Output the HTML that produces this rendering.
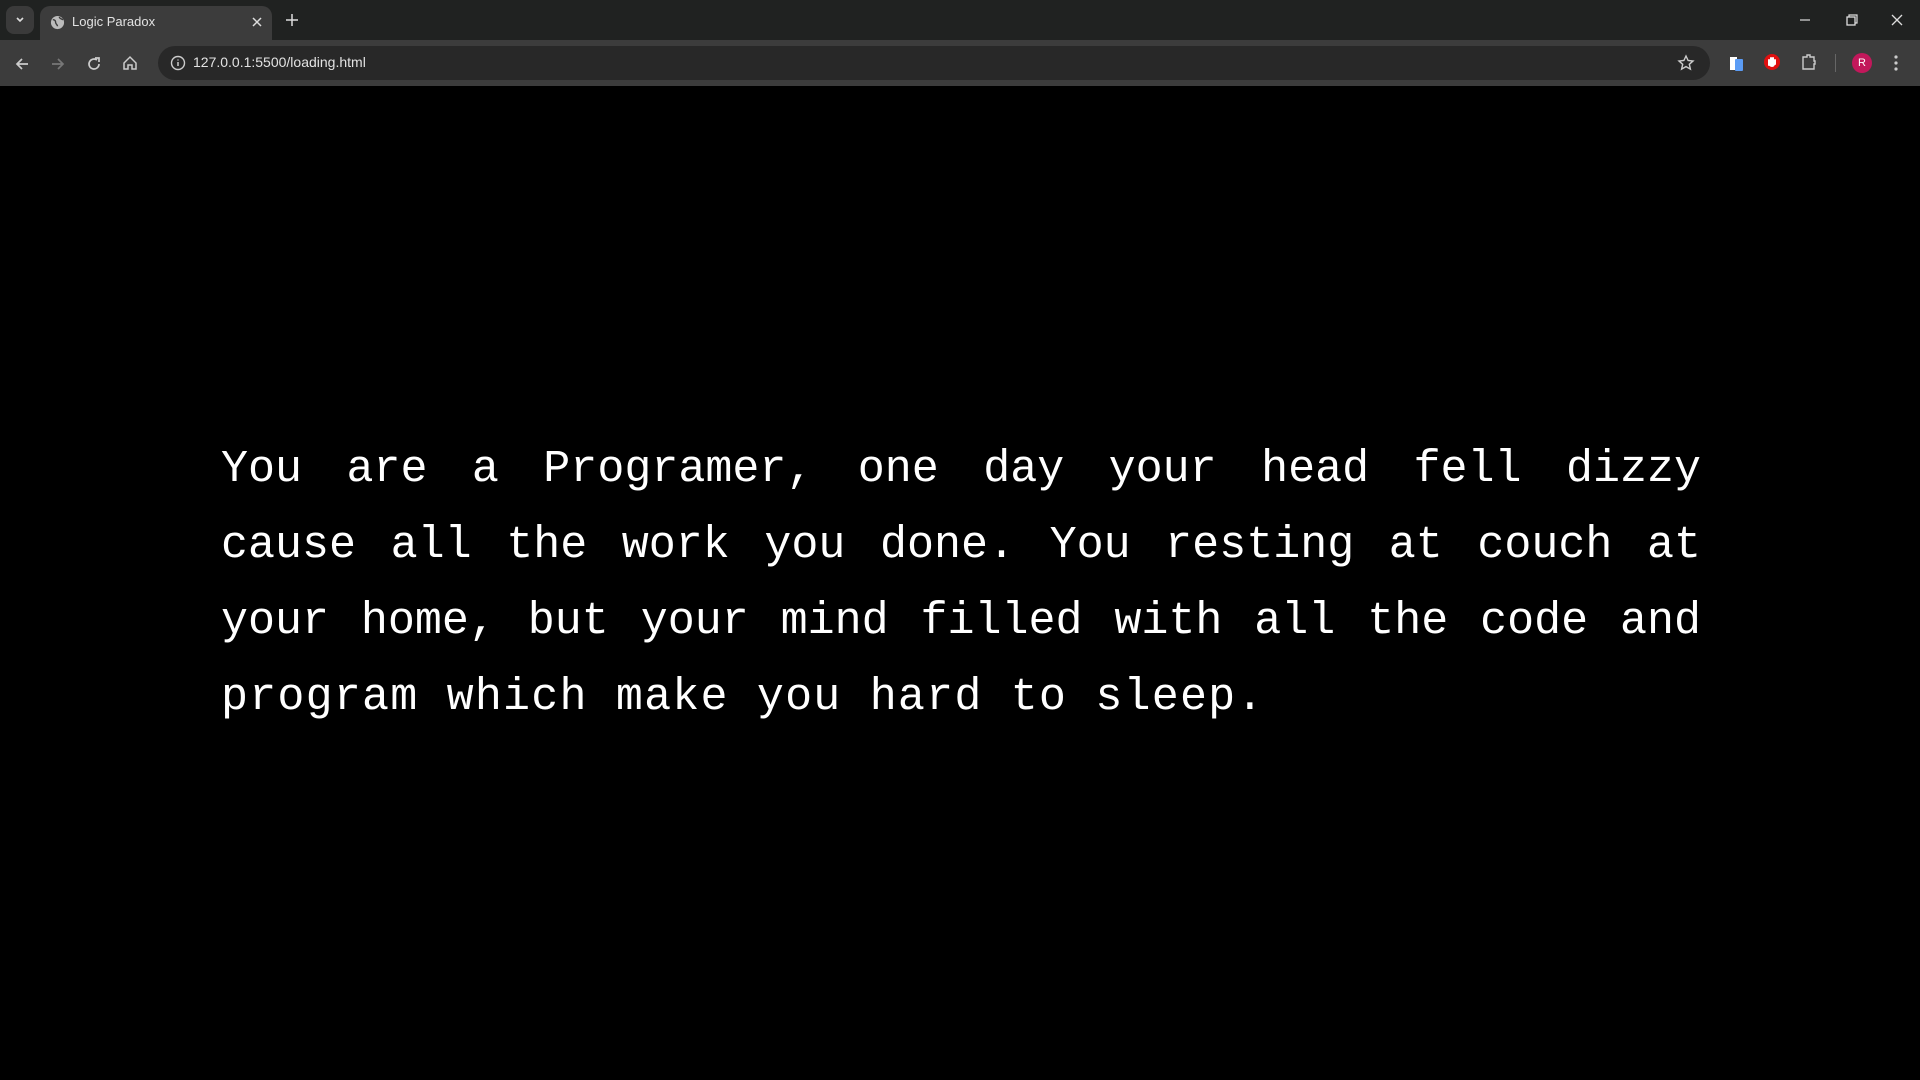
<!DOCTYPE html>
<html><head><meta charset="utf-8"><style>
*{margin:0;padding:0;box-sizing:border-box}
html,body{width:1920px;height:1080px;background:#000;overflow:hidden;font-family:"Liberation Sans",sans-serif}
.tabbar{position:absolute;left:0;top:0;width:1920px;height:40px;background:#202221}
.tsel{position:absolute;left:6px;top:6px;width:28px;height:28px;border-radius:8px;background:#3a3a3a}
.tab{position:absolute;left:40px;top:6px;width:232px;height:34px;background:#3c3c3c;border-radius:10px 10px 0 0}
.tab .t{position:absolute;left:32px;top:8px;color:#e3e3e3;font-size:13px}
.toolbar{position:absolute;left:0;top:40px;width:1920px;height:47px;background:#3c3c3c;border-bottom:1px solid #000}
.omni{position:absolute;left:158px;top:6px;width:1552px;height:34px;background:#282828;border-radius:17px}
.url{position:absolute;left:193px;top:14px;color:#e3e3e3;font-size:14px}
.txt{position:absolute;left:221px;top:432px;width:1480px;color:#fff;font-family:"Liberation Mono",monospace;font-size:45px;line-height:76px}
.txt div{text-align:justify;text-align-last:justify;white-space:nowrap}
.txt div.l{text-align-last:left;letter-spacing:1.2px}
svg{position:absolute}
</style></head><body>
<div class="tabbar">
 <div class="tsel"></div>
 <svg style="left:14px;top:14px" width="12" height="12" viewBox="0 0 12 12"><path d="M3 4l3 3 3-3" stroke="#ddd" stroke-width="1.6" fill="none"/></svg>
 <div class="tab">
  <svg style="left:10px;top:9px" width="15" height="15" viewBox="0 0 16 16"><circle cx="8" cy="8" r="7" fill="#bbb"/><path d="M3 5c2 0 3 1 3 3s2 2 2 4M10 2c0 2 2 2 4 3" stroke="#3c3c3c" stroke-width="1.5" fill="none"/></svg>
  <div class="t">Logic Paradox</div>
  <svg style="left:210px;top:9px" width="14" height="14" viewBox="0 0 14 14"><path d="M3 3l8 8M11 3l-8 8" stroke="#ddd" stroke-width="1.5"/></svg>
 </div>
 <svg style="left:285px;top:13px" width="14" height="14" viewBox="0 0 14 14"><path d="M7 1v12M1 7h12" stroke="#ddd" stroke-width="1.5"/></svg>
 <svg style="left:1798px;top:14px" width="14" height="12" viewBox="0 0 14 12"><path d="M2 6h10" stroke="#ddd" stroke-width="1.2"/></svg>
 <svg style="left:1845px;top:13px" width="14" height="14" viewBox="0 0 14 14"><rect x="2" y="4" width="8" height="8" stroke="#ddd" fill="none" stroke-width="1.3"/><path d="M4 4V2h8v8h-2" stroke="#ddd" fill="none" stroke-width="1.2"/></svg>
 <svg style="left:1890px;top:13px" width="14" height="14" viewBox="0 0 14 14"><path d="M2 2l10 10M12 2l-10 10" stroke="#ddd" stroke-width="1.3"/></svg>
</div>
<div class="toolbar">
 <svg style="left:14px;top:16px" width="16" height="16" viewBox="0 0 16 16"><path d="M14 8H3M8 3L3 8l5 5" stroke="#ccc" stroke-width="1.7" fill="none"/></svg>
 <svg style="left:50px;top:16px" width="16" height="16" viewBox="0 0 16 16"><path d="M2 8h11M8 3l5 5-5 5" stroke="#777" stroke-width="1.7" fill="none"/></svg>
 <svg style="left:86px;top:16px" width="16" height="16" viewBox="0 0 16 16"><path d="M13 8a5 5 0 1 1-2-4" stroke="#ccc" stroke-width="1.7" fill="none"/><path d="M9 2h4v4" stroke="#ccc" stroke-width="1.7" fill="none"/></svg>
 <svg style="left:122px;top:15px" width="16" height="16" viewBox="0 0 16 16"><path d="M2 8l6-6 6 6v6H10V10H6v4H2z" stroke="#ccc" stroke-width="1.5" fill="none"/></svg>
 <div class="omni">
  <svg style="left:12px;top:9px" width="16" height="16" viewBox="0 0 16 16"><circle cx="8" cy="8" r="6.5" stroke="#ccc" stroke-width="1.4" fill="none"/><path d="M8 7v4M8 4.5v1" stroke="#ccc" stroke-width="1.5"/></svg>
  <svg style="left:1519px;top:8px" width="18" height="18" viewBox="0 0 18 18"><path d="M9 2l2.1 4.5 4.9.5-3.7 3.3 1.1 4.8L9 12.6 4.6 15.1l1.1-4.8L2 7l4.9-.5z" stroke="#ccc" stroke-width="1.4" fill="none"/></svg>
 </div>
 <div class="url">127.0.0.1:5500/loading.html</div>
 <svg style="left:1729px;top:15px" width="16" height="18" viewBox="0 0 16 18"><rect x="1" y="2" width="7" height="13" fill="#fff"/><rect x="6" y="4" width="8" height="12" rx="1" fill="#5b9cf5"/></svg>
 <svg style="left:1763px;top:13px" width="18" height="18" viewBox="0 0 18 18"><circle cx="9" cy="9" r="8" fill="#e01010"/><path d="M6 12V7M8 11V5M10 11V5M12 11V7" stroke="#fff" stroke-width="2" stroke-linecap="round"/><circle cx="9" cy="11" r="3" fill="#fff"/></svg>
 <svg style="left:1800px;top:13px" width="18" height="18" viewBox="0 0 18 18"><path d="M3 4h4V2h3v2h4v4h1v3h-1v5H3z" stroke="#ccc" stroke-width="1.4" fill="none"/></svg>
 <div style="position:absolute;left:1835px;top:14px;width:1px;height:18px;background:#666"></div>
 <div style="position:absolute;left:1852px;top:13px;width:20px;height:20px;border-radius:50%;background:#c2185b;color:#fff;font-size:11px;text-align:center;line-height:20px">R</div>
 <svg style="left:1893px;top:14px" width="6" height="18" viewBox="0 0 6 18"><circle cx="3" cy="3" r="1.6" fill="#ccc"/><circle cx="3" cy="9" r="1.6" fill="#ccc"/><circle cx="3" cy="15" r="1.6" fill="#ccc"/></svg>
</div>
<div class="txt">
 <div>You are a Programer, one day your head fell dizzy</div>
 <div>cause all the work you done. You resting at couch at</div>
 <div>your home, but your mind filled with all the code and</div>
 <div class="l">program which make you hard to sleep.</div>
</div>
</body></html>
